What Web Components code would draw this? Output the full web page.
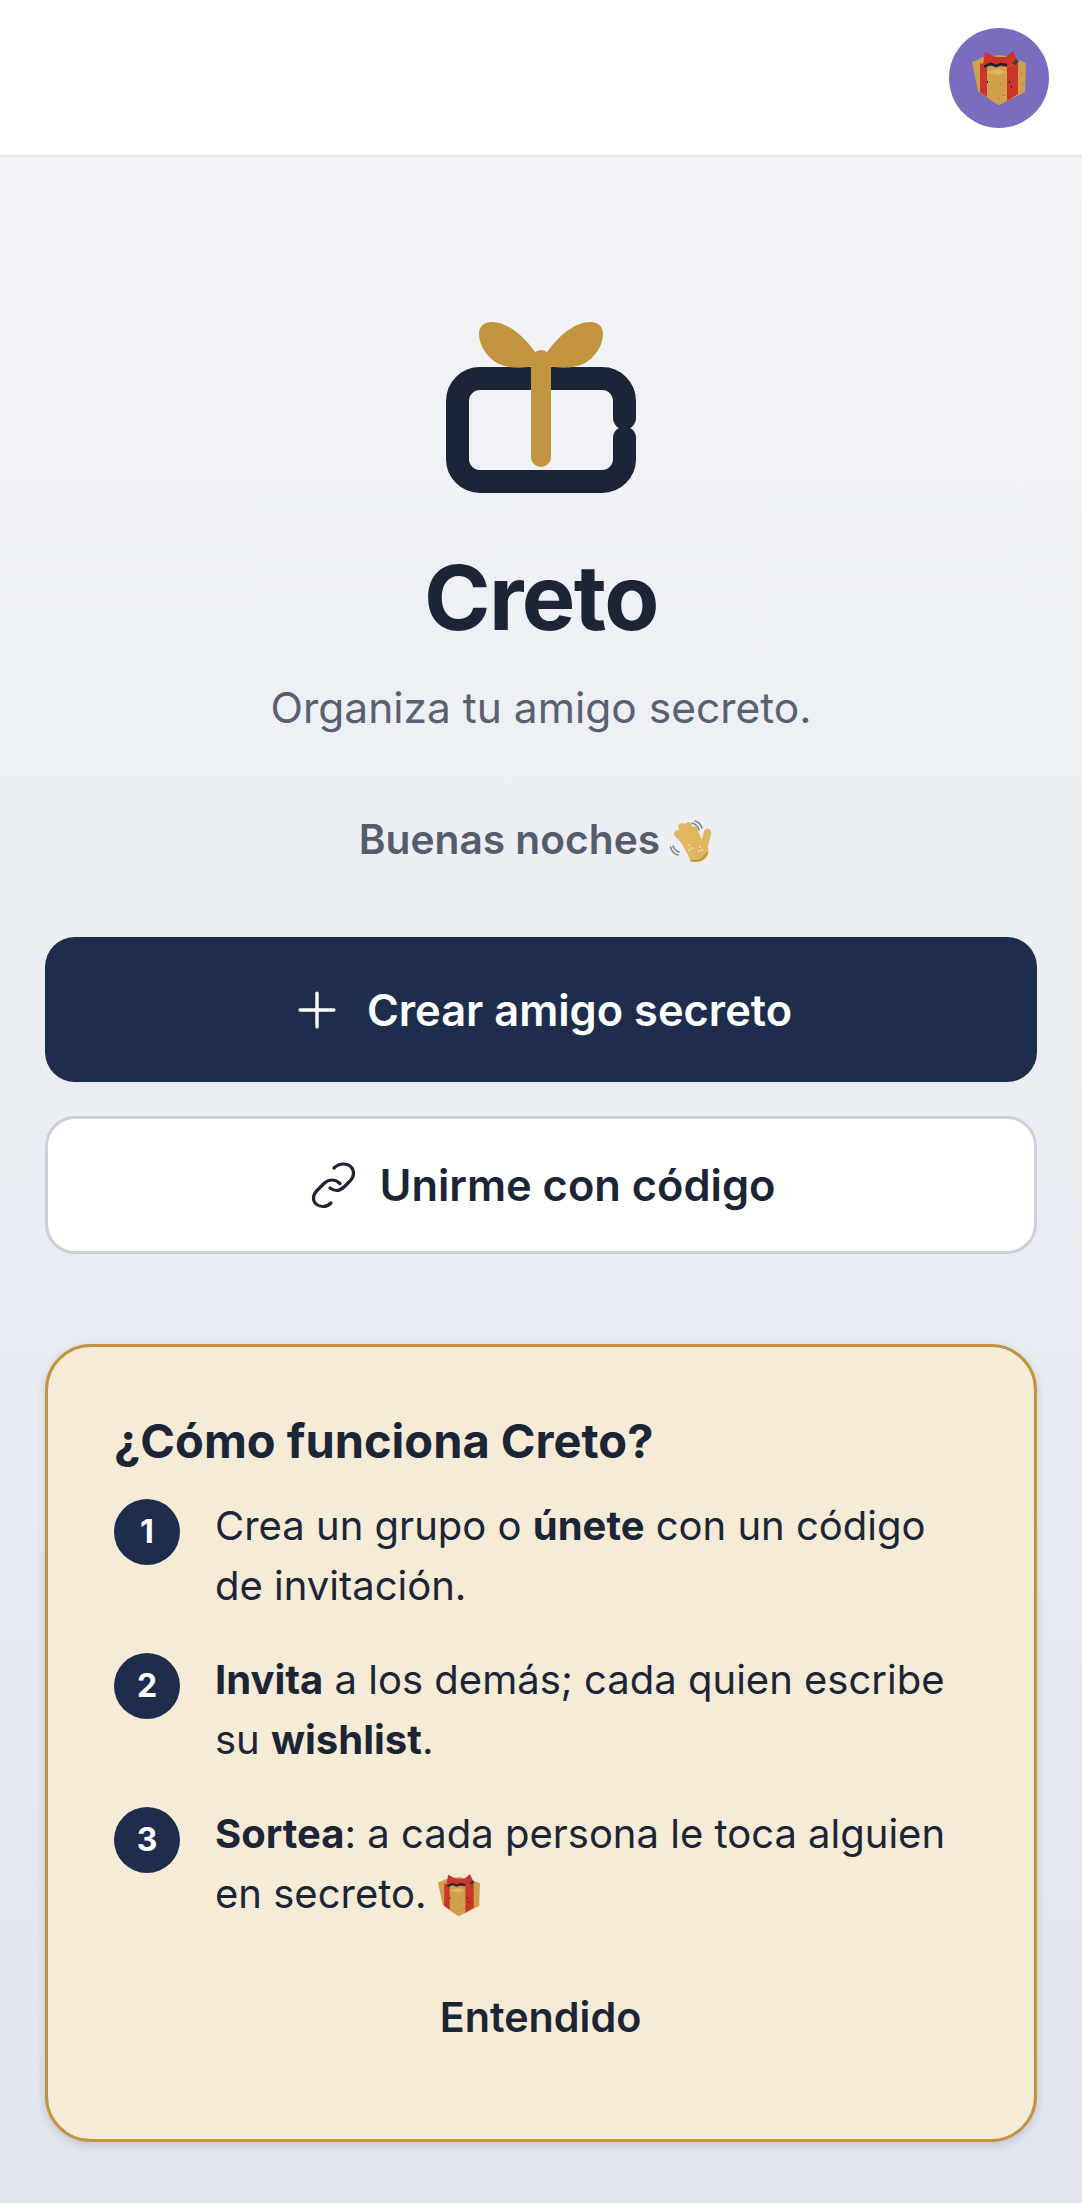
<!DOCTYPE html>
<html lang="es">
  <head>
    <meta charset="UTF-8" />
    <title>Creto</title>
    <style>
      html, body { margin: 0; padding: 0; }
      body {
        font-family: Inter, "Noto Sans", sans-serif;
        color: #1c2536;
      }
    </style>
  </head>
  <body>
    <creto-app>
      <top-bar></top-bar>
      <creto-hero></creto-hero>
      <creto-button kind="primary" icon="plus">Crear amigo secreto</creto-button>
      <creto-button kind="outline" icon="link">Unirme con código</creto-button>
      <help-card>
        <help-step n="1">Crea un grupo o <b>únete</b> con un código<br />de invitación.</help-step>
        <help-step n="2"><b>Invita</b> a los demás; cada quien escribe<br />su <b>wishlist</b>.</help-step>
        <help-step n="3"><b>Sortea</b>: a cada persona le toca alguien<br />en secreto. <gift-icon size="42"></gift-icon></help-step>
      </help-card>
    </creto-app>
    <script>
      class CretoApp extends HTMLElement {
        constructor() {
          super();
          let shadow = this.attachShadow({ mode: "open" });
          shadow.innerHTML = `
            <style>
              :host { display: flex; flex-direction: column; min-height: 2203px; box-sizing: border-box; }
              .main { flex: 1; display: flex; flex-direction: column; padding: 0 45px;
                background: linear-gradient(180deg, #f2f4f7 0%, #e1e4ed 100%); }
            </style>
            <slot name="bar"></slot>
            <div class="main"><slot></slot></div>`;
          this.querySelector("top-bar").slot = "bar";
        }
      }
      class GiftIcon extends HTMLElement {
        constructor() {
          super();
          let shadow = this.attachShadow({ mode: "open" });
          let size = this.getAttribute("size") || "54";
          shadow.innerHTML = `
            <style>
              :host { display: inline-block; width: ${size}px; height: ${size}px; vertical-align: -8px; }
              svg { display: block; width: 100%; height: 100%; }
            </style>
            <svg viewBox="0 0 54 54" role="img" aria-label="regalo">
              <path d="M0 11 12 6 28 4 42 7 54 12 53 41 27 54 23 52 6 40Z" fill="#cf9f4a"/>
              <path d="M8 12 15 14V46L8 41Z" fill="#cb352c"/>
              <path d="M35 16 46 12V43L35 50Z" fill="#cb352c"/>
              <path d="M15 21 25 18 35 21V49L27 54 17 48Z" fill="#d0a14c"/>
              <path d="M15 21 25 18 35 21 26 24Z" fill="#dfb661"/>
              <path d="M13 1 21 5 25 6 34 6 41 0 46 11 35 16 25 15 11 13Z" fill="#cb352c"/>
              <path d="M13 15 19 13 24 15 29 13 34 14" fill="none" stroke="#1f2433" stroke-width="2.6" stroke-linecap="round"/>
              <path d="M40 13 44 8 47 10 44 14Z" fill="#3a3d4a"/>
              <g fill="#cb352c">
                <rect x="28" y="32" width="1" height="1"/><rect x="31" y="44" width="1" height="1"/>
                <rect x="26" y="47" width="1" height="1"/><rect x="49" y="22" width="1" height="1"/>
                <rect x="50" y="33" width="1" height="1"/>
              </g>
              <g fill="#1f2433">
                <rect x="37" y="30" width="1" height="2"/><rect x="39" y="35" width="1" height="2"/>
                <rect x="15" y="30" width="1" height="2"/>
              </g>
            </svg>`;
        }
      }
      class WaveIcon extends HTMLElement {
        constructor() {
          super();
          let shadow = this.attachShadow({ mode: "open" });
          shadow.innerHTML = `
            <style>
              :host { display: inline-block; width: 42px; height: 42px; margin-right: 11px; vertical-align: -8px; }
              svg { display: block; width: 100%; height: 100%; }
            </style>
            <svg viewBox="0 0 42 42" role="img" aria-label="mano saludando" fill="none" stroke-linecap="round">
              <g stroke="#e1b762" stroke-width="7.5">
                <path d="M20 27 8 14"/>
                <path d="M23 25 12 7"/>
                <path d="M26 24 18 6"/>
                <path d="M29 24 24 10"/>
                <path d="M33 30 37.5 12.5"/>
              </g>
              <path d="M11 22C16 16 28 16 33 20 39 25 40 33 36 38 32 43 24 43 20 39Z" fill="#e1b762"/>
              <path d="M21 40.5C28 42 34 39 37 33" stroke="#c4923f" stroke-width="2"/>
              <g fill="#f3dfae">
                <circle cx="19" cy="25" r="1"/><circle cx="22" cy="28" r="1"/><circle cx="19" cy="30" r="1"/>
                <circle cx="30" cy="27" r="1"/><circle cx="32" cy="30" r="1"/><circle cx="29" cy="31" r="1"/>
              </g>
              <g stroke="#808390" stroke-width="1.5">
                <path d="M22 3C26 4 28 6 29 10"/>
                <path d="M25 1C29 2 31 5 32 8"/>
                <path d="M.5 27C1.5 31 4 34 8 35"/>
                <path d="M3 26C4 29 6 31 9 32"/>
              </g>
            </svg>`;
        }
      }
      class TopBar extends HTMLElement {
        constructor() {
          super();
          let shadow = this.attachShadow({ mode: "open" });
          shadow.innerHTML = `
            <style>
              :host { display: flex; justify-content: flex-end; align-items: center; height: 157px; box-sizing: border-box;
                background: #fff; border-bottom: 2px solid #e3e5ea; padding: 0 33px 0 0; }
              .avatar { width: 100px; height: 100px; border-radius: 50%; background: #7b6cbf;
                display: flex; align-items: center; justify-content: center; }
            </style>
            <div class="avatar"><gift-icon size="54"></gift-icon></div>`;
        }
      }
      class CretoHero extends HTMLElement {
        constructor() {
          super();
          let shadow = this.attachShadow({ mode: "open" });
          shadow.innerHTML = `
            <style>
              :host { display: flex; flex-direction: column; align-items: center; padding-top: 165px; }
              svg.logo { width: 190px; height: 171px; display: block; }
              h1 { margin: 55px 0 0; font-size: 90px; line-height: 100px; font-weight: 700; letter-spacing: -1.6px; color: #1c2536; }
              p { margin: 34px 0 0; font-size: 42.5px; line-height: 52px; color: #5a6070; }
              .hi { margin-top: 81px; font-size: 40.7px; line-height: 50px; font-weight: 600; color: #555d6c; }
            </style>
            <svg class="logo" viewBox="0 0 190 171" fill="none">
              <path d="M178.5 96V79A22.5 22.5 0 0 0 156 56.5H34A22.5 22.5 0 0 0 11.5 79V137A22.5 22.5 0 0 0 34 159.5H156A22.5 22.5 0 0 0 178.5 137V116" stroke="#1c2537" stroke-width="23" stroke-linecap="round"/>
              <rect x="85" y="28" width="20" height="117" rx="10" fill="#c29440"/>
              <path d="M89 30C76 12 60 0 46 0 37 0 33 5 33 12 33 24 42 36 51 41 60 46 75 47 87 44Z" fill="#c29440"/>
              <path d="M101 30C114 12 130 0 144 0 153 0 157 5 157 12 157 24 148 36 139 41 130 46 115 47 103 44Z" fill="#c29440"/>
            </svg>
            <h1>Creto</h1>
            <p>Organiza tu amigo secreto.</p>
            <div class="hi">Buenas noches <wave-icon></wave-icon></div>`;
        }
      }
      class CretoButton extends HTMLElement {
        constructor() {
          super();
          let shadow = this.attachShadow({ mode: "open" });
          let kind = this.getAttribute("kind") || "primary";
          const icons = {
            plus: { size: 54, box: 24, sw: 1.5, gap: 23, left: 0, d: "M12 4.5v15m7.5-7.5h-15" },
            link: { size: 48, box: 48, sw: 3.2, gap: 22, left: 3, d: "M25 7C28 4 31 3 34.5 3 40.5 3 44.5 7 44.5 12 44.5 15.5 43 18 41 20L35.5 25.5C33 28 30.5 29.5 27.5 29.5 25 29.5 23 28.5 21 27M31 22.5C29 20.5 26.5 19 23 19 20 19 17.5 20 15 22.5L8 29.5C5.5 32 4.5 34 4.5 37 4.5 42 8.5 45.5 14 45.5 17.5 45.5 19.5 44.5 22 42" },
          };
          const styles = {
            primary: { h: 145, bg: "#1f2d4d", color: "#fff", border: "none", mt: 72 },
            outline: { h: 138, bg: "#fff", color: "#1c2536", border: "3px solid #cdd0da", mt: 34 },
          };
          let s = styles[kind];
          let icon = icons[this.getAttribute("icon")];
          shadow.innerHTML = `
            <style>
              :host { display: flex; align-items: center; justify-content: center; gap: ${icon.gap}px; box-sizing: border-box;
                height: ${s.h}px; margin-top: ${s.mt}px; border-radius: 30px; background: ${s.bg}; color: ${s.color};
                border: ${s.border}; font-size: 43.4px; font-weight: 600; }
              svg { margin-left: ${icon.left}px; width: ${icon.size}px; height: ${icon.size}px; fill: none; stroke: currentColor; stroke-width: ${icon.sw}; stroke-linecap: round; stroke-linejoin: round; }
            </style>
            <svg viewBox="0 0 ${icon.box} ${icon.box}"><path d="${icon.d}"/></svg>
            <slot></slot>`;
        }
      }
      class HelpCard extends HTMLElement {
        constructor() {
          super();
          let shadow = this.attachShadow({ mode: "open" });
          shadow.innerHTML = `
            <style>
              :host { display: flex; flex-direction: column; box-sizing: border-box; margin-top: 90px; height: 798px;
                padding: 64px 67px 0 66px; background: #f5ebd6; border: 3px solid #c29440; border-radius: 46px;
                box-shadow: 0 3px 8px rgba(30, 40, 70, 0.16); }
              h2 { margin: 0 0 25px; font-size: 47px; line-height: 60px; font-weight: 700; color: #1c2536; }
              .steps { display: flex; flex-direction: column; gap: 34px; }
              button { align-self: center; margin-top: 68px; border: 0; background: none; padding: 0;
                font: 600 41.3px/50px Inter, sans-serif; color: #1c2536; }
            </style>
            <h2>¿Cómo funciona Creto?</h2>
            <div class="steps"><slot></slot></div>
            <button>Entendido</button>`;
        }
      }
      class HelpStep extends HTMLElement {
        constructor() {
          super();
          let shadow = this.attachShadow({ mode: "open" });
          shadow.innerHTML = `
            <style>
              :host { display: flex; gap: 35px; align-items: flex-start; font-size: 40px; line-height: 60px; color: #1c2536; }
              .n { flex: none; width: 66px; height: 66px; margin-top: 3px; border-radius: 50%; background: #1f2d4d; color: #fff;
                display: flex; align-items: center; justify-content: center; font-size: 32px; font-weight: 700; line-height: 1; }
              .t { flex: 1; min-width: 0; }
            </style>
            <div class="n">${this.getAttribute("n")}</div>
            <div class="t"><slot></slot></div>`;
        }
      }
      window.customElements.define("gift-icon", GiftIcon);
      window.customElements.define("wave-icon", WaveIcon);
      window.customElements.define("creto-app", CretoApp);
      window.customElements.define("top-bar", TopBar);
      window.customElements.define("creto-hero", CretoHero);
      window.customElements.define("creto-button", CretoButton);
      window.customElements.define("help-card", HelpCard);
      window.customElements.define("help-step", HelpStep);
    </script>
  </body>
</html>
